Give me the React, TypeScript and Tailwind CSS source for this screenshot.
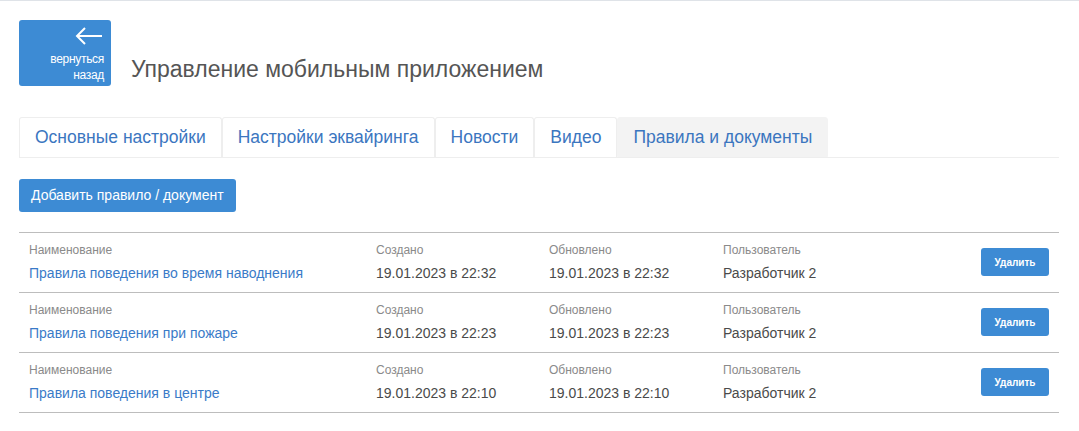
import React from "react";

const rows = [
  { name: "Правила поведения во время наводнения", created: "19.01.2023 в 22:32", updated: "19.01.2023 в 22:32", user: "Разработчик 2" },
  { name: "Правила поведения при пожаре", created: "19.01.2023 в 22:23", updated: "19.01.2023 в 22:23", user: "Разработчик 2" },
  { name: "Правила поведения в центре", created: "19.01.2023 в 22:10", updated: "19.01.2023 в 22:10", user: "Разработчик 2" },
];

const tabs = ["Основные настройки", "Настройки эквайринга", "Новости", "Видео", "Правила и документы"];

export default function App() {
  return (
    <div className="min-h-[431px] w-full bg-white border-t-[1.5px] border-[#dfe3e8] font-['Liberation_Sans',Arial,sans-serif]">
      <div className="pl-[19px] pr-[20px] pt-[19px]">
        <div className="flex items-end gap-[20px]">
          <button className="w-[92px] h-[66px] rounded-[3px] bg-[#3d8bd4] flex flex-col items-end justify-start pr-[7px] pt-[6px] text-white">
            <svg width="28" height="20" viewBox="0 0 28 20" className="mr-[1px]">
              <path d="M27 10H2M10 2L2 10L10 18" fill="none" stroke="white" strokeWidth="2" />
            </svg>
            <span className="mt-[5px] text-[12px] leading-[16px] text-right tracking-[-0.3px]">вернуться<br />назад</span>
          </button>
          <h1 className="text-[23px] leading-[28px] text-[#555] pb-[3px]">Управление мобильным приложением</h1>
        </div>

        <div className="mt-[31px] flex border-b border-[#eeeeee]">
          {tabs.map((t, i) => (
            <div
              key={t}
              className={
                i === tabs.length - 1
                  ? "h-[40px] flex items-center px-[15px] text-[17.5px] text-[#3b76bf] bg-[#f3f3f3] rounded-t-[3px] border border-[#f3f3f3]"
                  : "h-[40px] flex items-center px-[15px] text-[17.5px] text-[#3b76bf] border border-b-0 border-[#eeeeee] rounded-t-[3px]"
              }
            >
              {t}
            </div>
          ))}
        </div>

        <button className="mt-[21px] h-[33px] px-[12px] rounded-[3px] bg-[#3d8bd4] text-white text-[14px]">
          Добавить правило / документ
        </button>

        <div className="mt-[20px] border-b border-[#bdbdbd]">
          {rows.map((r) => (
            <div key={r.name} className="h-[60px] border-t border-[#bdbdbd] flex items-start pt-[9px] pl-[10px] pr-[10px]">
              <div className="w-[347px]">
                <div className="text-[12px] leading-[16px] text-[#8a8a8a]">Наименование</div>
                <div className="mt-[6px] text-[14px] leading-[18px] text-[#3a7bc8]">{r.name}</div>
              </div>
              <div className="w-[173px]">
                <div className="text-[12px] leading-[16px] text-[#8a8a8a]">Создано</div>
                <div className="mt-[6px] text-[14px] leading-[18px] text-[#4a4a4a]">{r.created}</div>
              </div>
              <div className="w-[174px]">
                <div className="text-[12px] leading-[16px] text-[#8a8a8a]">Обновлено</div>
                <div className="mt-[6px] text-[14px] leading-[18px] text-[#4a4a4a]">{r.updated}</div>
              </div>
              <div className="flex-1">
                <div className="text-[12px] leading-[16px] text-[#8a8a8a]">Пользователь</div>
                <div className="mt-[6px] text-[14px] leading-[18px] text-[#4a4a4a]">{r.user}</div>
              </div>
              <button className="w-[68px] h-[28px] mt-[6px] rounded-[3px] bg-[#3d8bd4] text-white text-[10px] font-bold">
                Удалить
              </button>
            </div>
          ))}
        </div>
      </div>
    </div>
  );
}
